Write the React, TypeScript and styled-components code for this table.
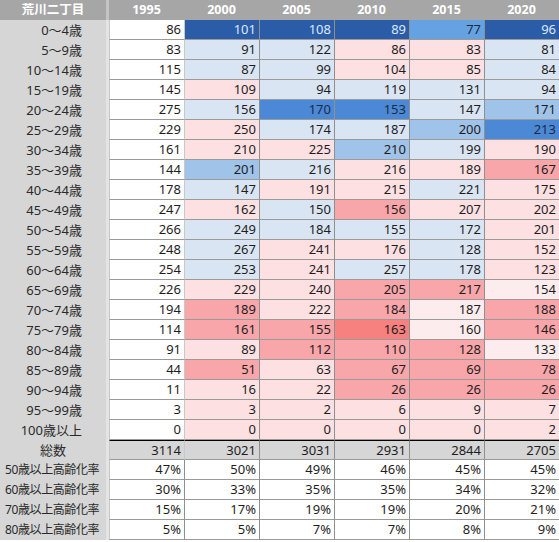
import React from "react";
import styled, { createGlobalStyle } from "styled-components";

const Global = createGlobalStyle`
  html, body { margin: 0; padding: 0; background: #ffffff; }
  body { font-family: "Noto Sans", "Noto Sans CJK JP", sans-serif; }
`;

const C: Record<string, [string, string]> = {
  W: ["#ffffff", "#1e1e1e"],
  LB: ["#dae5f3", "#1e1e1e"],
  LP: ["#fde0e2", "#1e1e1e"],
  VP: ["#fdeced", "#1e1e1e"],
  MP: ["#f8a6aa", "#1e1e1e"],
  SP: ["#f6817f", "#1e1e1e"],
  DB: ["#2b5ca8", "#dce9fb"],
  MB: ["#4b88d6", "#1e2a40"],
  B7: ["#65a2e2", "#1e2a40"],
  LM: ["#a0c3ea", "#1e1e1e"],
  T: ["#d6d6d6", "#1e1e1e"],
};

type Cell = [number, string];
const years = ["1995", "2000", "2005", "2010", "2015", "2020"];

const ageRows: { label: string; cells: Cell[] }[] = [
  { label: "0～4歳", cells: [[86, "W"], [101, "DB"], [108, "DB"], [89, "DB"], [77, "B7"], [96, "DB"]] },
  { label: "5～9歳", cells: [[83, "W"], [91, "LB"], [122, "LB"], [86, "LP"], [83, "LP"], [81, "LB"]] },
  { label: "10～14歳", cells: [[115, "W"], [87, "LB"], [99, "LB"], [104, "LP"], [85, "LP"], [84, "LB"]] },
  { label: "15～19歳", cells: [[145, "W"], [109, "LP"], [94, "LB"], [119, "LB"], [131, "LB"], [94, "LB"]] },
  { label: "20～24歳", cells: [[275, "W"], [156, "LB"], [170, "MB"], [153, "MB"], [147, "LB"], [171, "LM"]] },
  { label: "25～29歳", cells: [[229, "W"], [250, "LP"], [174, "LB"], [187, "LB"], [200, "LM"], [213, "MB"]] },
  { label: "30～34歳", cells: [[161, "W"], [210, "LP"], [225, "LP"], [210, "LM"], [199, "LB"], [190, "LP"]] },
  { label: "35～39歳", cells: [[144, "W"], [201, "LM"], [216, "LB"], [216, "LP"], [189, "LP"], [167, "MP"]] },
  { label: "40～44歳", cells: [[178, "W"], [147, "LB"], [191, "LP"], [215, "LP"], [221, "LB"], [175, "LP"]] },
  { label: "45～49歳", cells: [[247, "W"], [162, "LP"], [150, "LB"], [156, "MP"], [207, "LP"], [202, "LP"]] },
  { label: "50～54歳", cells: [[266, "W"], [249, "LB"], [184, "LB"], [155, "LB"], [172, "LB"], [201, "LP"]] },
  { label: "55～59歳", cells: [[248, "W"], [267, "LB"], [241, "LP"], [176, "LP"], [128, "LB"], [152, "LP"]] },
  { label: "60～64歳", cells: [[254, "W"], [253, "LB"], [241, "LP"], [257, "LB"], [178, "LB"], [123, "LP"]] },
  { label: "65～69歳", cells: [[226, "W"], [229, "LP"], [240, "LP"], [205, "MP"], [217, "MP"], [154, "VP"]] },
  { label: "70～74歳", cells: [[194, "W"], [189, "MP"], [222, "LP"], [184, "MP"], [187, "VP"], [188, "MP"]] },
  { label: "75～79歳", cells: [[114, "W"], [161, "MP"], [155, "MP"], [163, "SP"], [160, "VP"], [146, "MP"]] },
  { label: "80～84歳", cells: [[91, "W"], [89, "LP"], [112, "MP"], [110, "MP"], [128, "MP"], [133, "VP"]] },
  { label: "85～89歳", cells: [[44, "W"], [51, "MP"], [63, "LP"], [67, "MP"], [69, "MP"], [78, "MP"]] },
  { label: "90～94歳", cells: [[11, "W"], [16, "LP"], [22, "LP"], [26, "MP"], [26, "MP"], [26, "MP"]] },
  { label: "95～99歳", cells: [[3, "W"], [3, "LP"], [2, "LP"], [6, "LP"], [9, "LP"], [7, "LP"]] },
  { label: "100歳以上", cells: [[0, "W"], [0, "LP"], [0, "LP"], [0, "LP"], [0, "LP"], [2, "LP"]] },
];

const totals = [3114, 3021, 3031, 2931, 2844, 2705];

const rates: { label: string; values: string[] }[] = [
  { label: "50歳以上高齢化率", values: ["47%", "50%", "49%", "46%", "45%", "45%"] },
  { label: "60歳以上高齢化率", values: ["30%", "33%", "35%", "35%", "34%", "32%"] },
  { label: "70歳以上高齢化率", values: ["15%", "17%", "19%", "19%", "20%", "21%"] },
  { label: "80歳以上高齢化率", values: ["5%", "5%", "7%", "7%", "8%", "9%"] },
];

const Sheet = styled.div`
  display: grid;
  grid-template-columns: 109px repeat(6, 75px);
  grid-auto-rows: 20px;
  width: 559px;
  font-size: 13px;
  line-height: 1;
`;

const HeaderCell = styled.div<{ $first?: boolean }>`
  background: #a6a6a6;
  color: #ffffff;
  font-weight: 700;
  font-size: 12.5px;
  text-align: center;
  line-height: 20px;
  box-sizing: border-box;
  border-right: ${(p) => (p.$first ? "3px solid #c4c4c4" : "0")};
`;

const LabelCell = styled.div<{ $align: "right" | "center" | "left" }>`
  background: #d6d6d6;
  color: #2a2a2a;
  font-size: ${(p) => (p.$align === "left" ? "12px" : "13px")};
  line-height: 20px;
  text-align: ${(p) => p.$align};
  padding: ${(p) => (p.$align === "right" ? "0 24px 0 0" : p.$align === "left" ? "0 0 0 5px" : "0")};
  box-sizing: border-box;
  border-right: 3px solid #e4e4e4;
  white-space: nowrap;
  overflow: hidden;
  letter-spacing: ${(p) => (p.$align === "left" ? "-0.4px" : "0")};
`;

const DataCell = styled.div<{ $bg: string; $fg: string; $soft?: boolean; $top?: boolean }>`
  background: ${(p) => p.$bg};
  color: ${(p) => p.$fg};
  text-align: right;
  line-height: 19px;
  padding-right: 3px;
  box-sizing: border-box;
  border-left: 1px solid ${(p) => (p.$soft ? "#c9c9c9" : "#8f8f8f")};
  border-bottom: 1px solid #9a9a9a;
  border-top: ${(p) => (p.$top ? "1px solid #000000" : "0")};
`;

export default function App() {
  return (
    <>
      <Global />
      <Sheet>
        <HeaderCell $first>荒川二丁目</HeaderCell>
        {years.map((y) => (
          <HeaderCell key={y}>{y}</HeaderCell>
        ))}
        {ageRows.map((r) => (
          <React.Fragment key={r.label}>
            <LabelCell $align="right">{r.label}</LabelCell>
            {r.cells.map(([v, k], i) => (
              <DataCell key={i} $bg={C[k][0]} $fg={C[k][1]} $soft={i === 0 || i === 1}>
                {v}
              </DataCell>
            ))}
          </React.Fragment>
        ))}
        <LabelCell $align="center">総数</LabelCell>
        {totals.map((v, i) => (
          <DataCell key={i} $bg={C.T[0]} $fg={C.T[1]} $soft={i <= 1} $top>
            {v}
          </DataCell>
        ))}
        {rates.map((r) => (
          <React.Fragment key={r.label}>
            <LabelCell $align="left">{r.label}</LabelCell>
            {r.values.map((v, i) => (
              <DataCell key={i} $bg="#ffffff" $fg="#1e1e1e" $soft={i === 0}>
                {v}
              </DataCell>
            ))}
          </React.Fragment>
        ))}
      </Sheet>
    </>
  );
}
